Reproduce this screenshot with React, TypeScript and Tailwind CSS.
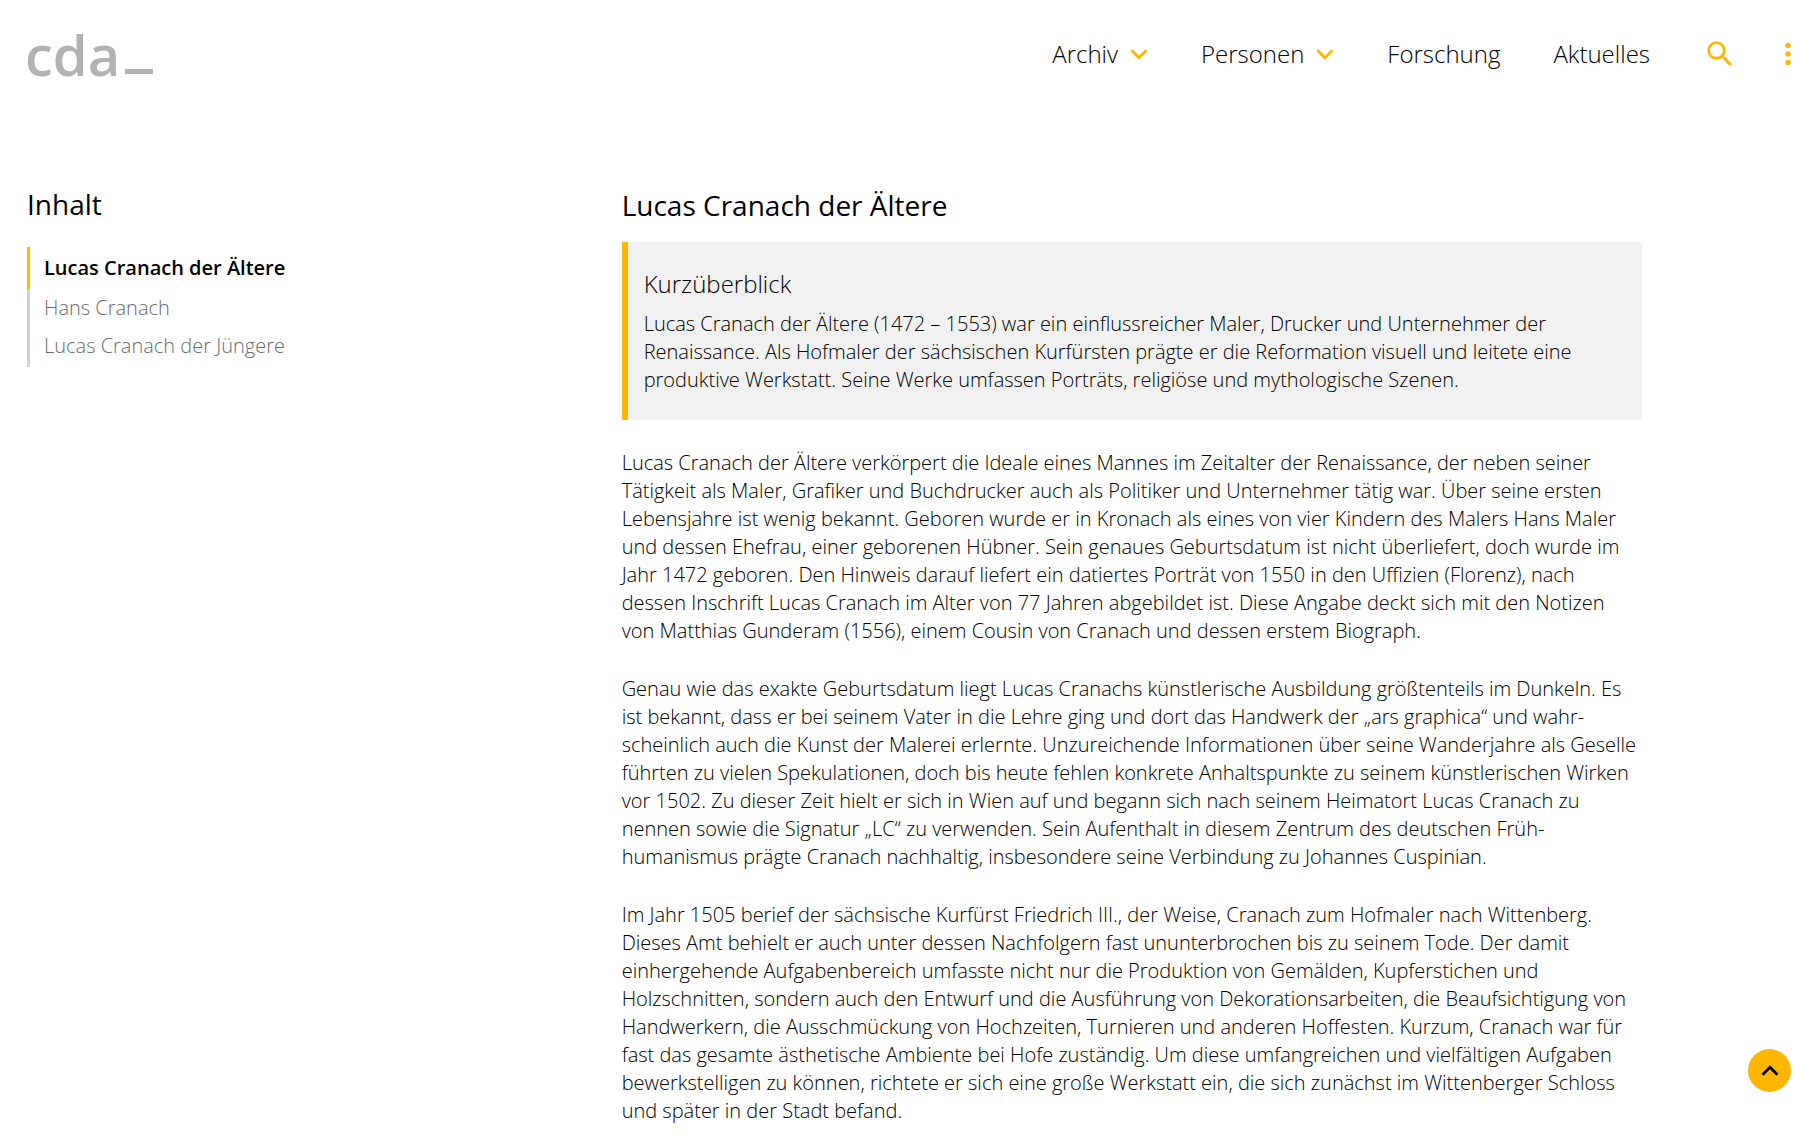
import { MdExpandLess, MdExpandMore, MdMoreVert, MdSearch } from "react-icons/md";

const paragraphs: string[][] = [
  [
    "Lucas Cranach der Ältere verkörpert die Ideale eines Mannes im Zeitalter der Renaissance, der neben seiner",
    "Tätigkeit als Maler, Grafiker und Buchdrucker auch als Politiker und Unternehmer tätig war. Über seine ersten",
    "Lebensjahre ist wenig bekannt. Geboren wurde er in Kronach als eines von vier Kindern des Malers Hans Maler",
    "und dessen Ehefrau, einer geborenen Hübner. Sein genaues Geburtsdatum ist nicht überliefert, doch wurde im",
    "Jahr 1472 geboren. Den Hinweis darauf liefert ein datiertes Porträt von 1550 in den Uffizien (Florenz), nach",
    "dessen Inschrift Lucas Cranach im Alter von 77 Jahren abgebildet ist. Diese Angabe deckt sich mit den Notizen",
    "von Matthias Gunderam (1556), einem Cousin von Cranach und dessen erstem Biograph.",
  ],
  [
    "Genau wie das exakte Geburtsdatum liegt Lucas Cranachs künstlerische Ausbildung größtenteils im Dunkeln. Es",
    "ist bekannt, dass er bei seinem Vater in die Lehre ging und dort das Handwerk der „ars graphica“ und wahr-",
    "scheinlich auch die Kunst der Malerei erlernte. Unzureichende Informationen über seine Wanderjahre als Geselle",
    "führten zu vielen Spekulationen, doch bis heute fehlen konkrete Anhaltspunkte zu seinem künstlerischen Wirken",
    "vor 1502. Zu dieser Zeit hielt er sich in Wien auf und begann sich nach seinem Heimatort Lucas Cranach zu",
    "nennen sowie die Signatur „LC“ zu verwenden. Sein Aufenthalt in diesem Zentrum des deutschen Früh-",
    "humanismus prägte Cranach nachhaltig, insbesondere seine Verbindung zu Johannes Cuspinian.",
  ],
  [
    "Im Jahr 1505 berief der sächsische Kurfürst Friedrich III., der Weise, Cranach zum Hofmaler nach Wittenberg.",
    "Dieses Amt behielt er auch unter dessen Nachfolgern fast ununterbrochen bis zu seinem Tode. Der damit",
    "einhergehende Aufgabenbereich umfasste nicht nur die Produktion von Gemälden, Kupferstichen und",
    "Holzschnitten, sondern auch den Entwurf und die Ausführung von Dekorationsarbeiten, die Beaufsichtigung von",
    "Handwerkern, die Ausschmückung von Hochzeiten, Turnieren und anderen Hoffesten. Kurzum, Cranach war für",
    "fast das gesamte ästhetische Ambiente bei Hofe zuständig. Um diese umfangreichen und vielfältigen Aufgaben",
    "bewerkstelligen zu können, richtete er sich eine große Werkstatt ein, die sich zunächst im Wittenberger Schloss",
    "und später in der Stadt befand.",
  ],
];

const overview = [
  "Lucas Cranach der Ältere (1472 – 1553) war ein einflussreicher Maler, Drucker und Unternehmer der",
  "Renaissance. Als Hofmaler der sächsischen Kurfürsten prägte er die Reformation visuell und leitete eine",
  "produktive Werkstatt. Seine Werke umfassen Porträts, religiöse und mythologische Szenen.",
];

function Lines({ lines }: { lines: string[] }) {
  return (
    <p className="whitespace-nowrap text-[20px] leading-[28px]">
      {lines.map((line) => (
        <span key={line} className="block">
          {line}
        </span>
      ))}
    </p>
  );
}

function NavMenu({ label }: { label: string }) {
  return (
    <button type="button" className="flex items-center gap-1">
      {label}
      <MdExpandMore className="size-[34px] text-[#ffb600]" aria-hidden />
    </button>
  );
}

export default function App() {
  return (
    <div className="bg-white font-['Open_Sans',sans-serif] font-light text-black">
      <header className="flex h-[108px] items-center justify-between pr-[13px] pl-[25px]">
        <a href="#start" aria-label="cda_ Startseite" className="flex items-end gap-[5px] text-[#b2b2b2]">
          <span className="text-[56px] leading-[60px] font-semibold">cda</span>
          <span className="mb-[10px] h-[5px] w-[28px] bg-[#b2b2b2]" />
        </a>
        <nav className="flex items-center gap-[45px] text-[24px] leading-[34px]">
          <NavMenu label="Archiv" />
          <NavMenu label="Personen" />
          <a href="#forschung" className="pr-2">Forschung</a>
          <a href="#aktuelles" className="pr-2">Aktuelles</a>
          <div className="flex gap-[34px] text-[#ffb600]">
            <button type="button" aria-label="Suche">
              <MdSearch className="size-[34px]" />
            </button>
            <button type="button" aria-label="Weitere Optionen">
              <MdMoreVert className="size-[34px]" />
            </button>
          </div>
        </nav>
      </header>

      <div className="grid grid-cols-3 gap-5 px-[27px] pt-[78px]">
        <aside>
          <h2 className="text-[28px] leading-[36px] font-normal">Inhalt</h2>
          <ul className="mt-[25px] text-[20px] leading-[38px] text-[#6b6b6b]">
            <li className="border-l-[3px] border-[#ffb600] pt-0.5 pb-0.5 pl-[14px] font-semibold text-black">
              <a href="#aeltere">Lucas Cranach der Ältere</a>
            </li>
            <li className="border-l-[3px] border-[#d1d1d1] pl-[14px]">
              <a href="#hans">Hans Cranach</a>
            </li>
            <li className="border-l-[3px] border-[#d1d1d1] pb-0.5 pl-[14px]">
              <a href="#juengere">Lucas Cranach der Jüngere</a>
            </li>
          </ul>
        </aside>

        <main id="aeltere" className="col-span-2 max-w-[1020px] pb-6">
          <h1 className="text-[28px] leading-[38px] font-normal">Lucas Cranach der Ältere</h1>
          <section className="mt-[18px] mb-[29px] border-l-[6px] border-[#ffb600] bg-[#f1f1f1] px-4 pt-6 pb-[26px]">
            <h2 className="mb-2 text-[24px] leading-[36px]">Kurzüberblick</h2>
            <Lines lines={overview} />
          </section>
          <div className="flex flex-col gap-[30px]">
            {paragraphs.map((lines) => (
              <Lines key={lines[0]} lines={lines} />
            ))}
          </div>
        </main>
      </div>

      <button
        type="button"
        aria-label="Nach oben"
        className="fixed right-[27px] bottom-[47px] flex size-[43px] items-center justify-center rounded-full bg-[#ffb600] text-black"
      >
        <MdExpandLess className="size-[34px]" />
      </button>
    </div>
  );
}
